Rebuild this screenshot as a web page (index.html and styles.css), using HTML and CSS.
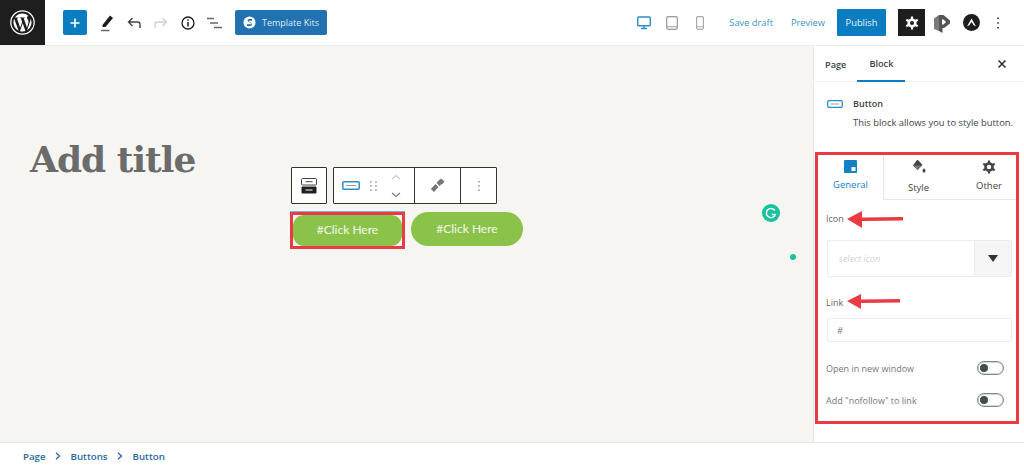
FILE: index.html
```html
<!DOCTYPE html>
<html lang="en">
<head>
<meta charset="utf-8">
<title>Edit Page</title>
<link rel="stylesheet" href="styles.css">
</head>
<body>
<div class="app">
  <header class="topbar">
    <div class="wp-logo">
      <svg width="25" height="25" viewBox="0 0 24 24"><circle cx="12" cy="12" r="11.200" fill="none" stroke="#fff" stroke-width="1.200"/><path fill="#fff" d="M3.300 12c0 3.400 2 6.400 4.900 7.800L4 8.500A8.700 8.700 0 0 0 3.300 12zm14.500-.4c0-1.100-.4-1.800-.7-2.400-.4-.7-.8-1.300-.8-2 0-.8.600-1.500 1.400-1.500h.1A8.700 8.700 0 0 0 4.700 7.200h.6c.9 0 2.300-.1 2.300-.1.500 0 .5.700.1.700 0 0-.5.100-1 .1l3.100 9.200 1.900-5.600-1.300-3.600c-.5 0-.9-.1-.9-.1-.5 0-.4-.8 0-.7 0 0 1.400.1 2.300.1.900 0 2.300-.1 2.300-.1.500 0 .5.700.1.700 0 0-.5.100-1 .1l3.100 9.100.8-2.800c.4-1.100.7-1.900.7-2.600zm-5.600 1.200l-2.600 7.500a8.700 8.700 0 0 0 5.300-.1l-.1-.1-2.600-7.300zm7.400-4.900l.1.900c0 .9-.2 1.900-.7 3.100l-2.600 7.600a8.700 8.700 0 0 0 3.200-11.600z"/></svg>
    </div>
    <div class="tools">
      <button class="add" aria-label="Add"><svg width="12" height="12" viewBox="0 0 12 12"><path d="M6 1.500v9M1.500 6h9" stroke="#fff" stroke-width="1.600"/></svg></button>
      <svg class="tool t-pen" width="14" height="18" viewBox="0 0 14 18"><path d="M2.500 11 10 1.500 13 4 5.500 13H2.500z" fill="#1e1e1e"/><path d="M1 16.500h8.500" stroke="#666" stroke-width="1.500"/></svg>
      <svg class="tool t-undo" width="14" height="12" viewBox="0 0 14 12"><path d="M13 11V7.500C13 6 12 5 10.500 5H2M5.500 1 1.500 5l4 4" fill="none" stroke="#444" stroke-width="1.400"/></svg>
      <svg class="tool t-redo" width="14" height="12" viewBox="0 0 14 12"><path d="M1 11V7.500C1 6 2 5 3.500 5H12M8.500 1l4 4-4 4" fill="none" stroke="#d0d0d0" stroke-width="1.400"/></svg>
      <svg class="tool t-info" width="14" height="14" viewBox="0 0 14 14"><circle cx="7" cy="7" r="6" fill="none" stroke="#1e1e1e" stroke-width="1.300"/><path d="M7 6v4.500M7 3.300v1.500" stroke="#1e1e1e" stroke-width="1.500"/></svg>
      <svg class="tool t-list" width="15" height="12" viewBox="0 0 15 12"><path d="M0 1.500h7M3 6h8M7 10.500h8" stroke="#666" stroke-width="1.600"/></svg>
      <button class="kits"><svg width="13" height="13" viewBox="0 0 14 14"><circle cx="7" cy="7" r="6.500" fill="#fff"/><path d="M9.700 3.300H6.500C5 3.300 4.500 5 5.500 6l3 1.700c.7.500.2 1.300-.5 1.300H4.300v1.700H8c1.600 0 2.300-2 1-3.100L6.300 6c-.4-.4-.2-1 .4-1h3z" fill="#2271b1"/></svg>Template Kits</button>
    </div>
    <div class="actions">
      <svg class="dev d1" width="14" height="14" viewBox="0 0 14 14"><rect x=".7" y="1" width="12.600" height="8.800" rx="1" fill="none" stroke="#2a8fc7" stroke-width="1.400"/><path d="M4 12.500h6M7 10v2.500" stroke="#2a8fc7" stroke-width="1.400"/></svg>
      <svg class="dev d2" width="12" height="14" viewBox="0 0 12 14"><rect x=".7" y=".7" width="10.600" height="12.600" rx="1.500" fill="none" stroke="#999" stroke-width="1.200"/><path d="M1 10.800h10" stroke="#999"/></svg>
      <svg class="dev d3" width="8" height="14" viewBox="0 0 8 14"><rect x=".6" y=".7" width="6.800" height="12.600" rx="1.200" fill="none" stroke="#aaa" stroke-width="1.200"/><path d="M1 10.800h6" stroke="#aaa"/></svg>
      <a class="link l-draft">Save draft</a>
      <a class="link l-prev">Preview</a>
      <button class="publish">Publish</button>
      <div class="gear"><svg width="14" height="14" viewBox="0 0 14 14"><circle cx="7" cy="7" r="3.300" fill="none" stroke="#fff" stroke-width="2.600"/><path d="M7 .5v2.500M7 11v2.500M1.300 3.700l2.200 1.300M10.500 9l2.200 1.300M1.300 10.300 3.500 9M10.500 5l2.200-1.300" stroke="#fff" stroke-width="2.200"/></svg></div>
      <svg class="plug p1" width="16" height="20" viewBox="0 0 16 20"><path d="M0 5.500 5 2v16l-5-2z" fill="#7a7a7a"/><path d="M5 2h4.500L16 7.500v3L10 15H8.500v5L5 18z" fill="#555"/><path d="M8 6.500h1.500L12 9l-2.500 2.500H8z" fill="#fff"/></svg>
      <svg class="plug p2" width="17" height="17" viewBox="0 0 16 16"><circle cx="8" cy="8" r="8" fill="#1e1e1e"/><path d="M3.800 11.500 8 4.300l4.200 7.200-2.100-1L8 7.500l-2.100 3z" fill="#fff"/></svg>
      <svg class="plug p3" width="4" height="14" viewBox="0 0 4 14"><path d="M2 1.500v1.600M2 6.200v1.600M2 10.900v1.600" stroke="#333" stroke-width="1.600"/></svg>
    </div>
  </header>

  <div class="body">
    <main class="canvas">
      <h1 class="title">Add title</h1>
      <div class="block-bar">
        <div class="bar-box sq"><svg width="16" height="16" viewBox="0 0 16 16"><rect x=".5" y=".5" width="15" height="6.500" rx="1" fill="#fff" stroke="#444"/><rect x=".5" y="8.500" width="15" height="7" rx="1" fill="#1e1e1e"/><path d="M4.500 3.700h7" stroke="#444"/><path d="M4.500 12h7" stroke="#fff"/></svg></div>
        <div class="bar-box group">
          <div class="seg s1">
            <svg width="18" height="9" viewBox="0 0 18 9"><rect x=".8" y=".8" width="16.400" height="7.400" rx="1" fill="#fff" stroke="#2a8fc7" stroke-width="1.500"/><path d="M4 4.500h10" stroke="#999"/></svg>
            <svg width="7" height="12" viewBox="0 0 7 12"><path d="M1 1v1.800M1 5v1.800M1 9.200V11M6 1v1.800M6 5v1.800M6 9.200V11" stroke="#888" stroke-width="1.200"/></svg>
            <svg class="updown" width="10" height="24" viewBox="0 0 10 24"><path d="M1 5l4-3.500L9 5" fill="none" stroke="#ccc" stroke-width="1.100"/><path d="M1 19l4 3.500L9 19" fill="none" stroke="#777" stroke-width="1.100"/></svg>
          </div>
          <div class="seg s2"><svg width="15" height="15" viewBox="0 0 15 15"><path d="M8 3l3-2.500 3.500 3-2 2.500-1.500.5L9.500 8 6.500 5zM5.500 6 8.500 9 4 14 .8 11z" fill="#777"/></svg></div>
          <div class="seg s3"><svg width="4" height="12" viewBox="0 0 4 12"><path d="M2 1v1.500M2 5.200v1.500M2 9.500V11" stroke="#777" stroke-width="1.200"/></svg></div>
        </div>
      </div>
      <div class="btn-row">
        <div class="btn-wrap"><a class="cta">#Click Here</a></div>
        <a class="cta second">#Click Here</a>
      </div>
      <div class="g-badge"><svg width="18" height="18" viewBox="0 0 18 18"><circle cx="9" cy="9" r="9" fill="#15c39a"/><path d="M12.800 6.500A4.600 4.600 0 1 0 13.300 10.500H9.800" fill="none" stroke="#fff" stroke-width="1.500"/></svg></div>
      <span class="g-dot"></span>
    </main>

    <aside class="side">
      <div class="side-tabs">
        <span class="stab">Page</span>
        <span class="stab active">Block</span>
        <svg class="close" width="10" height="10" viewBox="0 0 10 10"><path d="M1.500 1.500l7 7M8.500 1.500l-7 7" stroke="#333" stroke-width="1.600"/></svg>
      </div>
      <div class="card">
        <svg width="16" height="8" viewBox="0 0 16 8"><rect x=".7" y=".7" width="14.600" height="6.600" rx="1" fill="#fff" stroke="#2a8fc7" stroke-width="1.300"/><path d="M4 4h8" stroke="#999"/></svg>
        <div>
          <div class="card-name">Button</div>
          <p class="card-desc">This block allows you to style button.</p>
        </div>
      </div>
      <section class="panel">
        <div class="ptabs">
          <div class="ptab on"><svg width="13" height="13" viewBox="0 0 13 13"><rect width="13" height="13" rx="1" fill="#1382c4"/><rect x="7.500" y="7" width="4" height="4" fill="#fff"/></svg><span>General</span></div>
          <div class="ptab p-style"><svg width="14" height="16" viewBox="0 0 14 16"><path d="M5 1c1 0 1.500.5 2 1l3.500 4L5.500 11 1 6.500z" fill="#444"/><path d="M1.500 6.500h8.500L5.500 11z" fill="#777"/><path d="M12 9c-1 1.500-1.500 2-1.500 3a1.500 1.500 0 0 0 3 0c0-1-.5-1.500-1.500-3z" fill="#444"/></svg><span>Style</span></div>
          <div class="ptab p-other"><svg width="14" height="14" viewBox="0 0 14 14"><circle cx="7" cy="7" r="3.500" fill="none" stroke="#444" stroke-width="2.600"/><path d="M7 .5v2.500M7 11v2.500M1.300 3.700l2.200 1.300M10.500 9l2.200 1.300M1.300 10.300 3.500 9M10.500 5l2.200-1.300" stroke="#444" stroke-width="2.200"/></svg><span>Other</span></div>
        </div>
        <div class="form">
          <label class="lbl lbl-icon">Icon</label>
          <div class="select"><span>select icon</span><i class="caret"><b></b></i></div>
          <label class="lbl lbl-link">Link</label>
          <div class="input">#</div>
          <div class="row r1"><span>Open in new window</span><i class="toggle"></i></div>
          <div class="row r2"><span>Add "nofollow" to link</span><i class="toggle"></i></div>
        </div>
        <svg class="arrow a1" width="56" height="18" viewBox="0 0 56 18"><path d="M0 8 15 0v6.500L56 6v3.500L15 10v7z" fill="#ea3a42"/></svg>
        <svg class="arrow a2" width="53" height="16" viewBox="0 0 53 16"><path d="M0 7 14 0v5.500L53 5v3.500L14 9v6z" fill="#ea3a42"/></svg>
      </section>
    </aside>
  </div>

  <footer class="crumbs"><span>Page</span><svg width="6" height="8" viewBox="0 0 6 8"><path d="M1 .8 4.500 4 1 7.200" fill="none" stroke="#2b6a9b" stroke-width="1.300"/></svg><span>Buttons</span><svg width="6" height="8" viewBox="0 0 6 8"><path d="M1 .8 4.500 4 1 7.200" fill="none" stroke="#2b6a9b" stroke-width="1.300"/></svg><span>Button</span></footer>
</div>
</body>
</html>
```
FILE: styles.css
```css
* { box-sizing: border-box; }
html, body { margin: 0; height: 100%; overflow: hidden; background: #fff; }
body { font-family: "Open Sans", "Noto Sans", sans-serif; color: #444; }
.app { width: 1024px; height: 469px; display: flex; flex-direction: column; }
button { font-family: inherit; border: 0; padding: 0; }

.topbar { height: 46px; flex: none; display: flex; align-items: center; justify-content: space-between; border-bottom: 1px solid #eeeeee; background: #fff; }
.wp-logo { width: 45px; height: 45px; background: #1e1e1e; display: flex; align-items: center; justify-content: center; }
.tools { display: flex; align-items: center; flex: 1; padding-left: 18px; }
.add { width: 24px; height: 25px; background: #0a7cc0; border-radius: 2px; display: flex; align-items: center; justify-content: center; }
.tool { flex: none; }
.t-pen { margin-left: 13px; }
.t-undo { margin-left: 13px; }
.t-redo { margin-left: 13px; }
.t-info { margin-left: 13px; }
.t-list { margin-left: 12px; }
.kits { margin-left: 13px; width: 92px; height: 25px; background: #2271b1; color: #dfeaf4; font-size: 9px; border-radius: 2px; display: flex; align-items: center; justify-content: flex-start; gap: 6px; padding-left: 8px; }

.actions { display: flex; align-items: center; padding-right: 24px; }
.dev { flex: none; }
.d2 { margin-left: 15px; }
.d3 { margin-left: 18px; }
.link { font-size: 9.300px; color: #3a94c9; }
.l-draft { margin-left: 25px; }
.l-prev { margin-left: 18px; }
.publish { margin-left: 12px; width: 49px; height: 27px; background: #0a7cc0; color: #e9f4fb; font-size: 9.300px; border-radius: 1px; }
.gear { margin-left: 12px; width: 27px; height: 27px; background: #1e1e1e; display: flex; align-items: center; justify-content: center; }
.p1 { margin-left: 9px; }
.p2 { margin-left: 13px; }
.p3 { margin-left: 16px; }

.body { flex: 1; display: flex; min-height: 0; }
.canvas { position: relative; flex: 1; background: #f6f5f2; padding: 88px 0 0 30px; }
.title { margin: 0; font-family: "DejaVu Serif", "Liberation Serif", serif; font-weight: 700; font-size: 36px; line-height: 50px; color: #6b6b6b; letter-spacing: -1px; }

.block-bar { display: flex; gap: 6px; margin: -17px 0 0 261px; }
.bar-box { height: 37px; border: 1px solid #333; background: #fff; border-radius: 1px; display: flex; }
.sq { width: 36px; align-items: center; justify-content: center; }
.group { width: 164px; }
.seg { display: flex; align-items: center; justify-content: center; height: 100%; border-right: 1px solid #333; }
.s1 { width: 81px; gap: 10px; justify-content: flex-start; padding-left: 8px; }
.updown { margin-left: 4px; }
.s2 { width: 46px; }
.s3 { flex: 1; border-right: 0; }

.btn-row { display: flex; align-items: flex-start; gap: 6px; margin: 8px 0 0 260px; }
.btn-wrap { width: 115px; height: 37px; border: 3px solid #ea3a42; box-shadow: 0 -1px 0 #7fb0d8; display: flex; }
.cta { display: flex; align-items: center; justify-content: center; color: #f3f8ec; font-family: Lato, "Open Sans", sans-serif; font-size: 12px; background: #8bc34a; border-radius: 11px; flex: 1; height: 31px; padding-bottom: 3px; }
.second { flex: none; width: 112px; height: 34px; border-radius: 17px; padding-bottom: 2px; }
.g-badge { position: absolute; left: 762px; top: 158px; width: 18px; height: 18px; }
.g-badge svg { display: block; }
.g-dot { position: absolute; left: 790px; top: 208px; width: 6px; height: 6px; border-radius: 50%; background: #15c39a; }

.side { width: 211px; flex: none; border-left: 1px solid #e6e6e6; background: #fff; display: flex; flex-direction: column; }
.side-tabs { height: 36px; flex: none; display: flex; align-items: center; border-bottom: 1px solid #eee; position: relative; padding-left: 11px; font-size: 9.200px; font-weight: 600; color: #444; }
.stab { height: 100%; display: flex; align-items: center; padding-top: 2px; }
.stab.active { margin-left: 11px; padding: 2px 12px 0; border-bottom: 2px solid #0a7cc0; height: 36px; }
.close { margin-left: 92px; }
.card { height: 70px; flex: none; display: flex; gap: 10px; padding: 15px 0 0 13px; }
.card > svg { margin-top: 3px; flex: none; }
.card-name { font-size: 9px; font-weight: 600; line-height: 14px; color: #444; }
.card-desc { margin: 5px 0 0; font-size: 9.400px; line-height: 14px; color: #444; white-space: nowrap; }

.panel { position: relative; margin-left: 1px; width: 204px; height: 272px; border: 3px solid #ea3a42; }
.ptabs { display: flex; height: 45px; }
.ptab { display: flex; flex-direction: column; align-items: center; font-size: 9.500px; color: #444; padding-top: 5px; gap: 5px; border-bottom: 1px solid #e6e6e6; }
.ptab.on { width: 66px; color: #1382c4; border-right: 1px solid #e6e6e6; border-bottom: 0; background: #fff; }
.p-style { width: 69px; padding-top: 4px; gap: 6px; }
.p-other { flex: 1; padding-left: 9px; }

.form { padding: 0 4px 0 9px; display: flex; flex-direction: column; }
.lbl { font-size: 9px; line-height: 12px; color: #666; }
.lbl-icon { margin-top: 13px; margin-left: -1px; }
.select { margin-top: 15px; height: 37px; border: 1px solid #ececec; border-radius: 2px; display: flex; }
.select span { flex: 1; padding-left: 11px; font-size: 9px; font-style: italic; color: #cfcfcf; display: flex; align-items: center; }
.caret { width: 37px; background: #f5f5f5; border-left: 1px solid #ececec; display: flex; align-items: center; justify-content: center; }
.caret b { width: 0; height: 0; border: 5px solid transparent; border-top: 7px solid #333; border-bottom: 0; }
.lbl-link { margin-top: 20px; margin-left: -1px; }
.input { margin-top: 9px; height: 24px; border: 1px solid #ececec; border-radius: 2px; font-size: 9px; font-style: italic; color: #777; padding-left: 9px; display: flex; align-items: center; }
.row { display: flex; align-items: center; justify-content: space-between; font-size: 9px; color: #777; padding-right: 8px; margin-left: -1px; height: 14px; }
.r1 { margin-top: 19px; }
.r2 { margin-top: 18px; }
.toggle { width: 27px; height: 14px; border: 1px solid #888; border-radius: 7px; position: relative; background: #fff; box-shadow: inset 0 0 0 .5px #aaa; }
.toggle::before { content: ""; position: absolute; left: 2px; top: 2px; width: 8px; height: 8px; border-radius: 50%; background: #444c58; }
.arrow { position: absolute; }
.a1 { left: 29px; top: 56px; }
.a2 { left: 29px; top: 139px; }

.crumbs { height: 27px; flex: none; border-top: 1px solid #e6e6e6; background: #fff; display: flex; align-items: center; gap: 9.500px; padding: 0 0 0 23px; font-size: 9.700px; color: #2b6a9b; font-weight: 600; }
```
